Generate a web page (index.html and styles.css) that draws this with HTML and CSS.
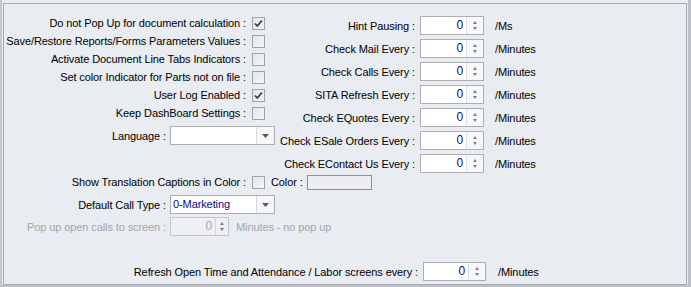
FILE: index.html
```html
<!DOCTYPE html>
<html>
<head>
<meta charset="utf-8">
<link rel="stylesheet" href="styles.css">
</head>
<body>
<div class="frame">
  <div class="panel">
    <div class="grid">
      <div class="col-left">
        <div class="crow"><span class="lbl w242">Do not Pop Up for document calculation :</span><span class="cb"><svg width="11" height="11" viewBox="0 0 11 11"><polyline points="2,5.5 4.3,8 9,2.5" fill="none" stroke="#3d3d3d" stroke-width="1.8"/></svg></span></div>
        <div class="crow"><span class="lbl w242">Save/Restore Reports/Forms Parameters Values :</span><span class="cb"></span></div>
        <div class="crow"><span class="lbl w242">Activate Document Line Tabs Indicators :</span><span class="cb"></span></div>
        <div class="crow"><span class="lbl w242">Set color Indicator for Parts not on file :</span><span class="cb"></span></div>
        <div class="crow"><span class="lbl w242">User Log Enabled :</span><span class="cb"><svg width="11" height="11" viewBox="0 0 11 11"><polyline points="2,5.5 4.3,8 9,2.5" fill="none" stroke="#3d3d3d" stroke-width="1.8"/></svg></span></div>
        <div class="crow"><span class="lbl w242">Keep DashBoard Settings :</span><span class="cb"></span></div>
        <div class="crow combo-row"><span class="lbl w162">Language :</span>
          <div class="combo"><span class="combo-text"></span><span class="combo-btn"><svg width="7" height="4" viewBox="0 0 7 4"><polygon points="0,0 7,0 3.5,4" fill="#5a5a5a"/></svg></span></div>
        </div>
      </div>
      <div class="col-right">
        <div class="rrow"><span class="lbl w139">Hint Pausing :</span><div class="spin"><span class="spin-val">0</span><span class="spin-btn"><i class="up"></i><i class="down"></i></span></div><span class="unit">/Ms</span></div>
        <div class="rrow"><span class="lbl w139">Check Mail Every :</span><div class="spin"><span class="spin-val">0</span><span class="spin-btn"><i class="up"></i><i class="down"></i></span></div><span class="unit">/Minutes</span></div>
        <div class="rrow"><span class="lbl w139">Check Calls Every :</span><div class="spin"><span class="spin-val">0</span><span class="spin-btn"><i class="up"></i><i class="down"></i></span></div><span class="unit">/Minutes</span></div>
        <div class="rrow"><span class="lbl w139">SITA Refresh Every :</span><div class="spin"><span class="spin-val">0</span><span class="spin-btn"><i class="up"></i><i class="down"></i></span></div><span class="unit">/Minutes</span></div>
        <div class="rrow"><span class="lbl w139">Check EQuotes Every :</span><div class="spin"><span class="spin-val">0</span><span class="spin-btn"><i class="up"></i><i class="down"></i></span></div><span class="unit">/Minutes</span></div>
        <div class="rrow"><span class="lbl w139">Check ESale Orders Every :</span><div class="spin"><span class="spin-val">0</span><span class="spin-btn"><i class="up"></i><i class="down"></i></span></div><span class="unit">/Minutes</span></div>
        <div class="rrow"><span class="lbl w139">Check EContact Us Every :</span><div class="spin"><span class="spin-val">0</span><span class="spin-btn"><i class="up"></i><i class="down"></i></span></div><span class="unit">/Minutes</span></div>
      </div>
      <div class="wide trow"><span class="lbl w242">Show Translation Captions in Color :</span><span class="cb"></span><span class="color-lbl">Color :</span><span class="color-box"></span></div>
      <div class="wide call-row"><span class="lbl w162">Default Call Type :</span>
        <div class="combo"><span class="combo-text">0-Marketing</span><span class="combo-btn"><svg width="7" height="4" viewBox="0 0 7 4"><polygon points="0,0 7,0 3.5,4" fill="#5a5a5a"/></svg></span></div>
      </div>
      <div class="wide popup-row disabled"><span class="lbl w162">Pop up open calls to screen :</span>
        <div class="spin spin-small"><span class="spin-val">0</span><span class="spin-btn"><i class="up"></i><i class="down"></i></span></div>
        <span class="popup-unit">Minutes - no pop up</span>
      </div>
      <div class="wide refresh-row"><span class="lbl w414">Refresh Open Time and Attendance / Labor screens every :</span>
        <div class="spin"><span class="spin-val">0</span><span class="spin-btn"><i class="up"></i><i class="down"></i></span></div><span class="unit unit-r">/Minutes</span>
      </div>
    </div>
  </div>
</div>
</body>
</html>
```

FILE: styles.css
```css
html, body {
  margin: 0;
  padding: 0;
}
body {
  width: 691px;
  height: 287px;
  overflow: hidden;
  background: #e9ecf1;
  font-family: "Liberation Sans", Arial, sans-serif;
  font-size: 11px;
  letter-spacing: -0.1px;
  color: #000;
}
.frame {
  box-sizing: border-box;
  height: 287px;
  width: 691px;
  padding: 3px 1px 0 1px;
  border-left: 2px solid #c4c8ce;
  border-right: 3px solid #bcc0c6;
  border-bottom: 2px solid #bcc0c6;
  background: #e9ecf1;
}
.panel {
  box-sizing: border-box;
  height: 282px;
  border: 1px solid #a6aab0;
  background: #e9ecf1;
}
.grid {
  display: grid;
  grid-template-columns: 272px auto;
  align-items: start;
  padding-top: 10px;
}
.lbl {
  flex: none;
  text-align: right;
  white-space: nowrap;
}
.w242 { width: 242px; }
.w162 { width: 162px; }
.w139 { width: 139px; }
.w414 { width: 414px; }

.crow {
  display: flex;
  align-items: center;
  height: 18px;
}
.crow .cb { margin-left: 6px; }

.cb {
  flex: none;
  box-sizing: border-box;
  width: 13px;
  height: 13px;
  border: 1px solid #9fa2a6;
  background: linear-gradient(135deg, #e3e4e6, #f7f7f8);
  display: flex;
  align-items: center;
  justify-content: center;
}

.combo-row {
  height: 19px;
  margin-top: 4px;
}
.combo {
  flex: none;
  box-sizing: border-box;
  margin-left: 4px;
  width: 105px;
  height: 19px;
  border: 1px solid #abaeb3;
  background: #fff;
  display: flex;
}
.combo-text {
  flex: 1;
  color: #0a0a80;
  padding-left: 2px;
  line-height: 17px;
}
.combo-btn {
  flex: none;
  width: 17px;
  border-left: 1px solid #d6d8dc;
  background: #f6f7f8;
  display: flex;
  align-items: center;
  justify-content: center;
}

.rrow {
  display: flex;
  align-items: center;
  height: 23px;
}
.spin {
  flex: none;
  box-sizing: border-box;
  margin-left: 5px;
  width: 64px;
  height: 19px;
  border: 1px solid #abaeb3;
  background: #fff;
  display: flex;
}
.spin-val {
  flex: 1;
  text-align: right;
  padding-right: 3px;
  color: #0a0a80;
  line-height: 17px;
  font-size: 12px;
}
.spin-btn {
  flex: none;
  width: 16px;
  border-left: 1px solid #dcdee2;
  background: #f7f8f9;
  display: flex;
  flex-direction: column;
  align-items: center;
  justify-content: center;
  gap: 3px;
}
.spin-btn i {
  display: block;
  width: 0;
  height: 0;
  border-left: 2.5px solid transparent;
  border-right: 2.5px solid transparent;
}
.spin-btn .up { border-bottom: 3px solid #7d7f83; }
.spin-btn .down { border-top: 3px solid #7d7f83; }
.unit {
  margin-left: 11px;
  white-space: nowrap;
}

.wide {
  grid-column: 1 / -1;
  display: flex;
  align-items: center;
}
.trow {
  height: 14px;
}
.trow .cb { margin-left: 6px; }
.color-lbl {
  margin-left: 6px;
  white-space: nowrap;
}
.color-box {
  flex: none;
  box-sizing: border-box;
  margin-left: 4px;
  width: 65px;
  height: 15px;
  border: 1px solid #8d9196;
  background: #eceef1;
}
.call-row {
  height: 19px;
  margin-top: 6px;
}
.popup-row {
  height: 19px;
  margin-top: 3px;
}
.disabled {
  color: #a3a5a8;
}
.disabled .spin {
  border-color: #c4c6ca;
  background: #eef0f3;
}
.disabled .spin-val {
  color: #a3a5a8;
}
.disabled .spin-btn {
  background: #eef0f3;
  border-left-color: #d3d5d9;
}
.spin-small {
  margin-left: 4px;
  width: 59px;
}
.spin-small .spin-btn { width: 12px; }
.popup-unit {
  margin-left: 7px;
  white-space: nowrap;
}
.refresh-row {
  height: 19px;
  margin-top: 26px;
}
.refresh-row .spin { width: 63px; }
.unit-r { margin-left: 12px; }
```
